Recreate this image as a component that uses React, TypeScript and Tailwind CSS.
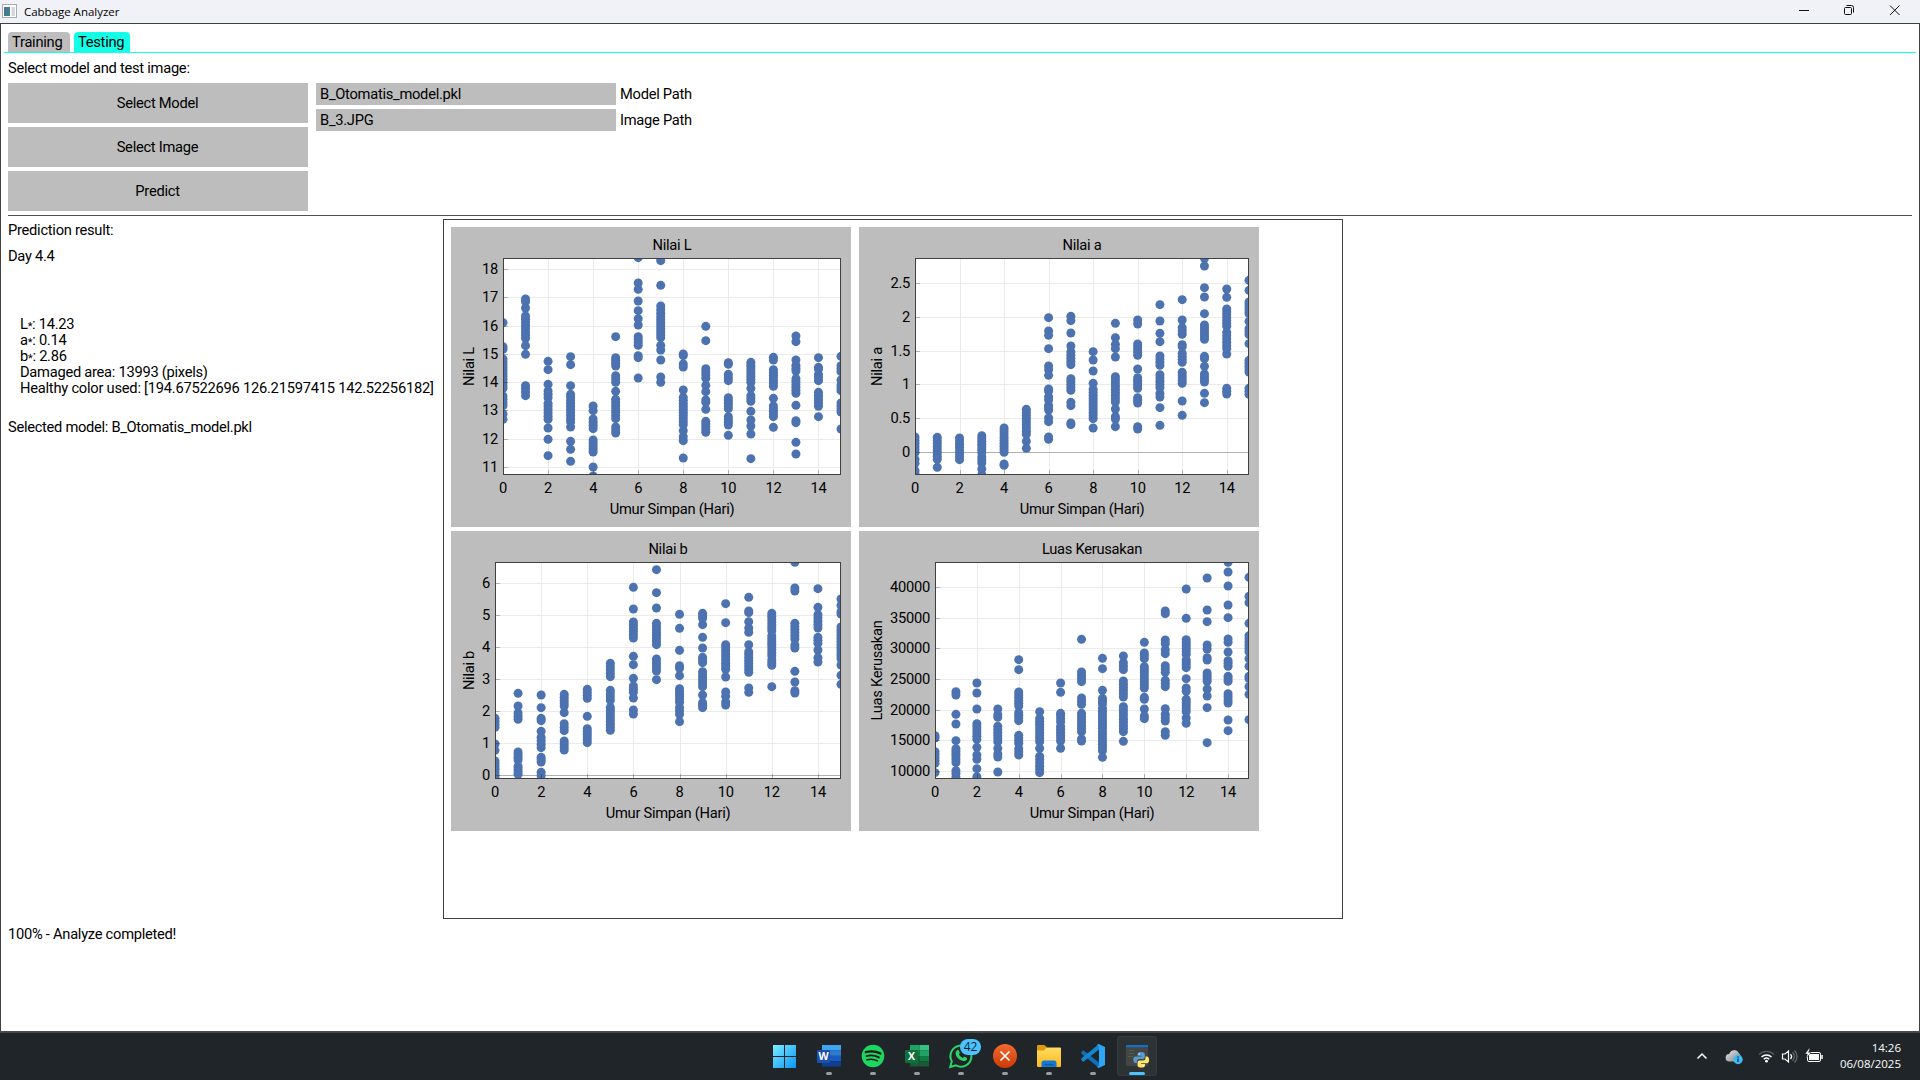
import React from "react";

type Span = number | [number, number];

interface PlotProps {
  title: string;
  left: number;
  right: number;
  ticks: { label: string; y: number }[];
  zeroLine?: number;
  columns: Span[][];
}

const WIDTH = 400;
const HEIGHT = 300;
const TOP = 31;
const BOTTOM = 248;

/* Positions are stored in thirds of a pixel; spans are runs of overlapping samples. */
function expand(spans: Span[]): number[] {
  return spans.flatMap((s) => {
    if (typeof s === "number") return [s / 3];
    const n = Math.max(1, Math.round((s[1] - s[0]) / 9));
    return Array.from({ length: n + 1 }, (_, i) => (s[0] + ((s[1] - s[0]) * i) / n) / 3);
  });
}

function Plot({ title, left, right, ticks, zeroLine, columns }: PlotProps) {
  const step = (right - left) / 15;
  const mid = (left + right) / 2;
  const id = title.replace(/ /g, "-");
  const xs = [0, 2, 4, 6, 8, 10, 12, 14];
  return (
    <svg width={WIDTH} height={HEIGHT} className="block shrink-0 bg-[#bdbdbd]" fontSize="14.7" fill="#000">
      <clipPath id={id}>
        <rect x={left} y={TOP} width={right - left} height={BOTTOM - TOP} />
      </clipPath>
      <rect x={left} y={TOP} width={right - left} height={BOTTOM - TOP} fill="#fff" />
      {xs.slice(1).map((v) => (
        <rect key={v} x={Math.round(left + v * step)} y={TOP} width="1" height={BOTTOM - TOP} fill="#ebebeb" />
      ))}
      {ticks.map((t) => (
        <rect key={t.label} x={left} y={Math.round(t.y)} width={right - left} height="1" fill="#ebebeb" />
      ))}
      {zeroLine !== undefined && <rect x={left} y={zeroLine} width={right - left} height="1" fill="#b0b0b0" />}
      <g clipPath={`url(#${id})`} fill="#4c72b0">
        {columns.map((col, i) =>
          expand(col).map((y, k) => <circle key={`${i}-${k}`} cx={left + i * step} cy={y} r="4.5" />)
        )}
      </g>
      {xs.slice(1).map((v) => (
        <rect key={v} x={Math.round(left + v * step)} y={BOTTOM - 5} width="1" height="5" fill="#00000040" />
      ))}
      {ticks.map((t) => (
        <rect key={t.label} x={left} y={Math.round(t.y)} width="5" height="1" fill="#00000040" />
      ))}
      <rect x={left + 0.5} y={TOP + 0.5} width={right - left - 1} height={BOTTOM - TOP - 1} fill="none" stroke="#404040" />
      {xs.map((v) => (
        <text key={v} x={left + v * step} y={BOTTOM + 18} textAnchor="middle">{v}</text>
      ))}
      {ticks.map((t) => (
        <text key={t.label} x={left - 5} y={Math.round(t.y) + 5} textAnchor="end">{t.label}</text>
      ))}
      <text x={mid} y="23" textAnchor="middle">{title}</text>
      <text x={mid} y="287" textAnchor="middle">Umur Simpan (Hari)</text>
      <text x="0" y="0" transform={`translate(23 ${(TOP + BOTTOM) / 2}) rotate(-90)`} textAnchor="middle">{title}</text>
    </svg>
  );
}

/* Converts readings taken against an outer frame into panel space. */
const shift = (dy: number, cols: Span[][]): Span[][] =>
  cols.map((c) => c.map((s): Span => (typeof s === "number" ? s - dy : [s[0] - dy, s[1] - dy])));

const nilaiL = shift(21, [
  [308, 380, 388, [417, 505], [528, 557], 582, 598],
  [237, 245, 264, [288, 355], 377, 403, 497, [505, 527]],
  [424, 449, 493, [513, 533], [550, 598], 624, 658, 707],
  [410, 434, 497, [523, 605], 621, 664, 688, 724],
  [558, 572, [597, 626], [660, 696], 741, 768],
  [350, [413, 438], [467, 487], 514, [538, 596], [621, 639]],
  [113, 189, 208, 243, 272, 296, 315, [350, 376], 407, 413, 474],
  [113, 122, 196, [258, 280], [290, 353], 376, 390, 420, 471, 487],
  [402, 407, 432, 441, 510, [532, 614], 632, [650, 662], 714],
  [319, 362, [446, 475], 496, 515, [540, 547], 568, [604, 637]],
  [428, 433, [463, 482], [533, 566], [590, 615], 646],
  [[427, 487], 505, [527, 544], 574, 600, 618, 642, 716],
  [[412, 420], [449, 499], 535, [558, 590], 622],
  [348, 365, 420, [436, 453], [476, 520], 556, 602, 608, 667, 702],
  [413, [442, 447], [463, 482], [517, 559], 590],
  [409, [437, 455], 480, [495, 512], [549, 576], 627],
]);

const nilaiA = shift(21, [
  [[651, 698], 718, 730, 752, 762],
  [[652, 718], 742],
  [[654, 719]],
  [[647, 698], [711, 729], 747, 764],
  [[624, 697], 732, 736],
  [[568, 643], 664, 685],
  [293, 333, 346, 386, [438, 449], 466, [507, 513], [530, 540], [556, 570], [594, 605], 651, 658],
  [289, 302, 339, 378, [396, 434], [476, 511], [547, 557], [609, 614]],
  [395, 420, 453, 490, [508, 596], 624],
  [310, 353, [373, 386], 411, [470, 546], 567, [590, 597], 620],
  [[300, 312], [372, 406], 447, [473, 505], [533, 549], 620, 627],
  [254, 303, 340, 365, [408, 436], [464, 503], [520, 531], 563, 616],
  [239, 300, [323, 343], [374, 380], [400, 427], [457, 490], 543, 586],
  [115, 138, 203, 231, 281, [315, 358], [409, 416], 439, [462, 486], 520, 548],
  [207, 232, [267, 319], [337, 386], 402, [505, 522]],
  [181, 211, [246, 281], 304, [326, 344], 371, [421, 456], [505, 523]],
]);

const nilaiB = shift(18, [
  [[580, 607], 657, 676, [708, 758]],
  [505, 543, [564, 583], [681, 705], [724, 748]],
  [510, 548, [580, 587], 619, [637, 668], [697, 711], [742, 752]],
  [[508, 543], 563, [596, 617], [648, 675]],
  [[493, 520], 574, [611, 653]],
  [[415, 455], [496, 526], [547, 616]],
  [187, 252, [291, 339], 394, 419, 460, [483, 502], 519, [555, 567]],
  [134, 203, 249, [295, 359], [402, 438], 464],
  [268, 310, 376, [422, 430], 452, [491, 532], [547, 568], 590],
  [[265, 280], 299, 337, 369, [397, 413], [440, 485], 510, [533, 548]],
  [236, 293, [359, 433], 456, [501, 514], [531, 540]],
  [217, [258, 263], 290, [309, 322], 359, [380, 442], [489, 502]],
  [[265, 317], [332, 392], [405, 421], 485],
  [112, [189, 198], [295, 342], [360, 369], 439, 471, [497, 504]],
  [191, 247, [269, 309], [337, 355], 375, [398, 411]],
  [222, 241, [260, 267], [306, 401], 420, 451, 478],
]);

const kerusakan = shift(18, [
  [632, 639, [680, 715], 743],
  [500, 510, 568, 597, 647, [671, 713], [737, 746], 757],
  [474, 504, 552, [596, 643], 667, [690, 703], 731, 755],
  [552, [569, 577], [604, 650], 670, [687, 696], 741],
  [404, 434, [501, 543], [563, 587], [631, 655], [671, 690]],
  [560, [580, 650], 670, [694, 743]],
  [474, 502, 565, [571, 590], [604, 648], 670],
  [343, [441, 470], [519, 538], [565, 620], [642, 648]],
  [400, 431, 496, [520, 537], [550, 610], [620, 677], 697],
  [393, [413, 434], [468, 516], [545, 620], 649],
  [352, [384, 401], [425, 489], [517, 523], 552, [573, 581]],
  [258, 266, [345, 356], [374, 386], [422, 442], [466, 485], 551, [568, 588], [620, 631]],
  [192, 280, [344, 388], [405, 428], 461, [489, 499], [523, 560], 579, 595],
  [159, 255, 290, [360, 372], [398, 405], [444, 469], 492, 513, 548, 653],
  [112, 141, 183, 240, 278, [342, 352], 381, [407, 424], [454, 469], [506, 534], 585, 617],
  [157, 214, 233, 295, [332, 380], 401, 424, [454, 461], 485, 508, 584],
]);

const linear = (labels: string[], first: number, last: number) =>
  labels.map((label, i) => ({ label, y: first + ((last - first) * i) / (labels.length - 1) }));

function Button({ children }: { children: string }) {
  return (
    <button className="flex h-10 w-[300px] items-center justify-center bg-[#bdbdbd] pr-px">{children}</button>
  );
}

function PathField({ value, label }: { value: string; label: string }) {
  return (
    <div className="flex h-[22px] items-center gap-1">
      <div className="h-[22px] w-[300px] bg-[#bdbdbd] px-1 leading-[22px]">{value}</div>
      <span>{label}</span>
    </div>
  );
}

function Reading({ name, value }: { name: string; value: string }) {
  return (
    <p className="h-4">
      {name}
      <span className="align-[-1px] text-[11px] leading-none">*</span>: {value}
    </p>
  );
}

function TaskIcon({ children, state }: { children: React.ReactNode; state?: "open" | "active" }) {
  return (
    <div className={state === "active" ? "relative size-10 rounded bg-[#2d3235] ring-1 ring-inset ring-[#363b3e]" : "relative size-10"}>
      <svg viewBox="0 0 40 40" className="size-10 overflow-visible">{children}</svg>
      {state === "open" && <span className="absolute bottom-[1px] left-[17px] h-[3px] w-1.5 rounded-full bg-[#9a9d9e]" />}
      {state === "active" && <span className="absolute bottom-[1px] left-3 h-[3px] w-4 rounded-full bg-[#4cc2ff]" />}
    </div>
  );
}

function Taskbar() {
  return (
    <footer className="relative flex h-[49px] shrink-0 items-start justify-center border-t-2 border-[#464a48] bg-[#1f2528] pt-[3px] font-['Open_Sans',sans-serif] tracking-normal text-white">
      <div className="ml-[2px] flex gap-1">
        <TaskIcon>
          <defs>
            <linearGradient id="win" x1="8" y1="9" x2="31" y2="32" gradientUnits="userSpaceOnUse">
              <stop stopColor="#7cecff" /><stop offset="1" stopColor="#0a94f5" />
            </linearGradient>
          </defs>
          <path fill="url(#win)" d="M8 9h11v11H8zM20 9h11v11H20zM8 21h11v11H8zM20 21h11v11H20z" />
        </TaskIcon>
        <TaskIcon state="open">
          <rect x="13" y="9" width="19" height="5.4" fill="#41a5ee" />
          <rect x="13" y="14.4" width="19" height="5.4" fill="#2b7cd3" />
          <rect x="13" y="19.8" width="19" height="5.4" fill="#185abd" />
          <rect x="13" y="25.2" width="19" height="5.4" fill="#103f91" />
          <rect x="8" y="14" width="13" height="13" rx="1" fill="#1a50b0" />
          <text x="14.5" y="24.2" fontSize="10.5" fontWeight="700" fill="#fff" textAnchor="middle">W</text>
        </TaskIcon>
        <TaskIcon state="open">
          <circle cx="20" cy="20" r="11.3" fill="#1ed760" />
          <g fill="none" stroke="#161b1c" strokeLinecap="round">
            <path strokeWidth="2.3" d="M12.8 16.2c5-1.4 10.4-.9 14.6 1.4" />
            <path strokeWidth="1.9" d="M13.5 20.1c4.2-1.2 8.8-.7 12.4 1.3" />
            <path strokeWidth="1.6" d="M14 23.7c3.7-.9 7.4-.5 10.5 1.2" />
          </g>
        </TaskIcon>
        <TaskIcon state="open">
          <rect x="13" y="9" width="9.5" height="5.5" fill="#21a366" />
          <rect x="22.5" y="9" width="9.5" height="5.5" fill="#33c481" />
          <rect x="13" y="14.5" width="9.5" height="5.5" fill="#107c41" />
          <rect x="22.5" y="14.5" width="9.5" height="5.5" fill="#21a366" />
          <rect x="13" y="20" width="9.5" height="10.5" fill="#185c37" />
          <rect x="22.5" y="20" width="9.5" height="5.5" fill="#107c41" />
          <rect x="22.5" y="25.5" width="9.5" height="5" fill="#185c37" />
          <rect x="8" y="14" width="13" height="13" rx="1" fill="#0f703b" />
          <text x="14.5" y="24.2" fontSize="10.5" fontWeight="700" fill="#fff" textAnchor="middle">X</text>
        </TaskIcon>
        <TaskIcon state="open">
          <path fill="none" stroke="#2bd366" strokeWidth="2" d="M9.2 31l1.6-5.700A10.500 10.500 0 1 1 15 29.400z" />
          <path fill="#2bd366" d="M16.200 14.200c.5-.5 1.300-.5 1.600.2l.9 2c.2.5 0 .9-.8 1.900.9 1.800 2.200 2.900 4 3.700.8-1 1.200-1.400 1.700-1.200l2.100 1c.6.3.5 1.300 0 2-.8 1.100-2.200 1.500-3.600 1.200-4-1-7-3.900-7.500-7.300-.2-1.400.5-2.700 1.600-3.500z" />
          <rect x="19" y="3" width="21" height="16" rx="8" fill="#4cc2ff" />
          <text x="29.5" y="15.3" fontSize="12" fill="#10242f" textAnchor="middle">42</text>
        </TaskIcon>
        <TaskIcon state="open">
          <defs>
            <linearGradient id="ox" x1="0" y1="0" x2="0" y2="1">
              <stop stopColor="#f26a30" /><stop offset="1" stopColor="#cc3a05" />
            </linearGradient>
          </defs>
          <circle cx="20" cy="20" r="12" fill="url(#ox)" />
          <path stroke="#fff" strokeWidth="1.7" strokeLinecap="round" d="M16 16l8 8M24 16l-8 8" />
        </TaskIcon>
        <TaskIcon state="open">
          <defs>
            <linearGradient id="fold" x1="0" y1="0" x2="0" y2="1">
              <stop stopColor="#ffdc62" /><stop offset="1" stopColor="#fbb91c" />
            </linearGradient>
          </defs>
          <path fill="#dd9a0a" d="M8 10q0-1 1-1h6.500l2.500 2.500L16 15H8z" />
          <path fill="url(#fold)" d="M17.500 11.500H31q1 0 1 1V30q0 1-1 1H9q-1 0-1-1V14.500h7z" />
          <path fill="#1278d0" d="M12.500 31v-4q0-2.500 2.500-2.500h10q2.500 0 2.500 2.500v4z" />
          <path fill="#0a5ba6" d="M15.500 28h9v1.300h-9z" />
        </TaskIcon>
        <TaskIcon state="open">
          <path fill="#0f6fb8" d="M8.300 16.200l2-1.900L26 26.500V32L8.300 17.600z" />
          <path fill="#1387cf" d="M8.300 24l2 1.800L26 13.500V8L8.300 22.500z" />
          <path fill="#2aa7f5" d="M25.500 8L32 11v18l-6.500 3-1.500-1 2-1.500v-19L24 9z" />
        </TaskIcon>
        <TaskIcon state="active">
          <rect x="9" y="9" width="22" height="21" fill="#454545" />
          <rect x="9" y="9" width="22" height="2.2" fill="#1470c4" />
          <path stroke="#3d6b3f" d="M12 14.500h5M12 17.500h5M11 20.500h5" />
          <g transform="translate(16.3 16)">
            <path fill="#5a9bd0" d="M7.600 0C5 0 4.200 1 4.200 2.200v1.500h3.900v.7H2.300C.8 4.400 0 5.600 0 7.700s1 3.300 2.200 3.300h1.400V9.300c0-1.300 1-2.300 2.300-2.300h3.600c1.100 0 2-.9 2-2V2.200C11.500.8 10.200 0 7.600 0z" />
            <path fill="#ffe468" d="M8.200 15.600c2.600 0 3.500-1 3.500-2.200v-1.500H7.800v-.7h5.700c1.500 0 2.300-1.200 2.300-3.300s-1-3.300-2.200-3.300h-1.400v1.700c0 1.300-1 2.300-2.300 2.300H6.300c-1.100 0-2 .9-2 2v2.800c0 1.400 1.300 2.200 3.900 2.200z" />
            <circle cx="5.9" cy="2" r=".7" fill="#fff" />
            <circle cx="9.9" cy="13.6" r=".7" fill="#fff" />
          </g>
        </TaskIcon>
      </div>
      <div className="absolute right-[19px] top-0 flex h-[46px] items-center">
        <svg width="130" height="20" viewBox="0 0 130 20" fill="none" className="mr-[14px]">
          <defs>
            <linearGradient id="cloud" x1="0" y1="0" x2="1" y2="1">
              <stop stopColor="#e8e8e8" /><stop offset="1" stopColor="#7d8183" />
            </linearGradient>
          </defs>
          <path stroke="#fff" strokeWidth="1.5" d="M1.500 12.500L6 8l4.500 4.500" />
          <path fill="url(#cloud)" d="M33.500 15.500a3.700 3.700 0 0 1-.3-7.400 5.200 5.200 0 0 1 9.600-1.300q2.200 2 2.200 5v3.700z" />
          <circle cx="42" cy="13.5" r="4.700" fill="#43b9f2" />
          <path stroke="#0b3f63" strokeWidth="1.4" d="M42 12.500v3.600M42 10.300v1.300" />
          <path stroke="#596063" strokeWidth="1.3" d="M63 8.500a10.500 10.500 0 0 1 15 0" />
          <path stroke="#fff" strokeWidth="1.5" d="M65.500 11a7 7 0 0 1 10 0M67.800 13.300a4 4 0 0 1 5.400 0" />
          <circle cx="70.5" cy="15.2" r="1.4" fill="#fff" />
          <path stroke="#fff" strokeWidth="1.2" d="M86.500 8h2.500l3.500-3v11l-3.500-3h-2.500zM94.500 8.200a3.500 3.500 0 0 1 0 4.800" />
          <path stroke="#6a7073" strokeWidth="1.2" d="M96.500 6.200a6 6 0 0 1 0 8.600M98.500 4.500a8.500 8.500 0 0 1 0 12" />
          <rect x="111.5" y="6.5" width="13" height="9" rx="1.5" stroke="#fff" />
          <rect x="113" y="8" width="10" height="6" fill="#fff" />
          <path stroke="#fff" strokeWidth="1.5" d="M126 9v4" />
          <path fill="#fff" stroke="#1f2426" strokeWidth=".5" d="M113 2.500l-4 5.500h2.500l-1.500 4.500 5-6h-2.500l1.500-4z" />
        </svg>
        <div className="text-right text-[11.5px] leading-4">
          <div>14:26</div>
          <div>06/08/2025</div>
        </div>
      </div>
    </footer>
  );
}

export default function App() {
  return (
    <div className="flex h-[1080px] w-[1920px] flex-col overflow-hidden bg-white font-['Roboto',sans-serif] text-[14.7px] leading-4 tracking-[-0.27px] text-black">
      <header className="flex h-[23px] shrink-0 items-center justify-between bg-[#f0f2f7] font-['Open_Sans',sans-serif]">
        <div className="flex items-center gap-[7px] pl-[2px]">
          <svg width="15" height="14" viewBox="0 0 15 14" className="-mt-[1px]">
            <rect x=".5" y=".5" width="14" height="13" fill="#fff" stroke="#a9abb0" />
            <rect x="2" y="3" width="6" height="9" fill="#3f7f8c" />
            <rect x="2" y="3" width="3" height="5" fill="#4c70a8" />
            <rect x="9.5" y="3" width="3.5" height="9" fill="#d3d6da" />
          </svg>
          <span className="text-[11.5px] tracking-[-0.02px]">Cabbage Analyzer</span>
        </div>
        <svg width="121" height="23" viewBox="0 0 121 23" fill="none" stroke="#111">
          <path d="M0 10.500h10" />
          <rect x="45.5" y="7.5" width="7" height="7" rx="1" />
          <path d="M47.500 5.500h5q2 0 2 2v5" />
          <path d="M91 5.500l9.500 9.500M100.500 5.500L91 15" />
        </svg>
      </header>

      <main className="flex min-h-0 flex-1 flex-col border border-b-0 border-[#404040] px-[7px] pt-2">
        <nav className="-mx-1 flex h-[21px] shrink-0 gap-1 border-b border-[#14ffe8] pl-1">
          <div className="w-[62px] rounded-t bg-[#bdbdbd] pl-1 leading-5">Training</div>
          <div className="w-14 rounded-t bg-[#14ffe8] pl-1 leading-5">Testing</div>
        </nav>
        <p className="mt-[7px] h-[23px] shrink-0 leading-4">Select model and test image:</p>
        <section className="flex shrink-0 gap-2">
          <div className="flex flex-col gap-1">
            <Button>Select Model</Button>
            <Button>Select Image</Button>
            <Button>Predict</Button>
          </div>
          <div className="flex flex-col gap-1">
            <PathField value="B_Otomatis_model.pkl" label="Model Path" />
            <PathField value="B_3.JPG" label="Image Path" />
          </div>
        </section>
        <hr className="mt-1 shrink-0 border-t border-[#505050]" />
        <section className="mt-[3px] flex shrink-0">
          <div className="flex w-[435px] shrink-0 flex-col pt-[3px]">
            <p>Prediction result:</p>
            <p className="mt-[10px]">Day 4.4</p>
            <div className="ml-3 mt-[52px] whitespace-nowrap">
              <Reading name="L" value="14.23" />
              <Reading name="a" value="0.14" />
              <Reading name="b" value="2.86" />
              <p>Damaged area: 13993 (pixels)</p>
              <p className="tracking-[-0.24px]">Healthy color used: [194.67522696 126.21597415 142.52256182]</p>
            </div>
            <p className="mt-[23px] tracking-[-0.3px]">Selected model: B_Otomatis_model.pkl</p>
          </div>
          <div className="grid h-[700px] w-[900px] grid-cols-[400px_400px] content-start gap-x-2 gap-y-1 border border-[#404040] p-[7px]">
            <Plot
              title="Nilai L"
              left={52}
              right={390}
              ticks={linear(["18", "17", "16", "15", "14", "13", "12", "11"], 42, 240)}
              columns={nilaiL}
            />
            <Plot
              title="Nilai a"
              left={56}
              right={390}
              ticks={linear(["2.5", "2", "1.5", "1", "0.5", "0"], 56, 225)}
              zeroLine={225}
              columns={nilaiA}
            />
            <Plot
              title="Nilai b"
              left={44}
              right={390}
              ticks={linear(["6", "5", "4", "3", "2", "1", "0"], 52, 244)}
              zeroLine={244}
              columns={nilaiB}
            />
            <Plot
              title="Luas Kerusakan"
              left={76}
              right={390}
              ticks={linear(["40000", "35000", "30000", "25000", "20000", "15000", "10000"], 56, 240)}
              columns={kerusakan}
            />
          </div>
        </section>
        <p className="mt-[7px]">100% - Analyze completed!</p>
      </main>

      <Taskbar />
    </div>
  );
}
